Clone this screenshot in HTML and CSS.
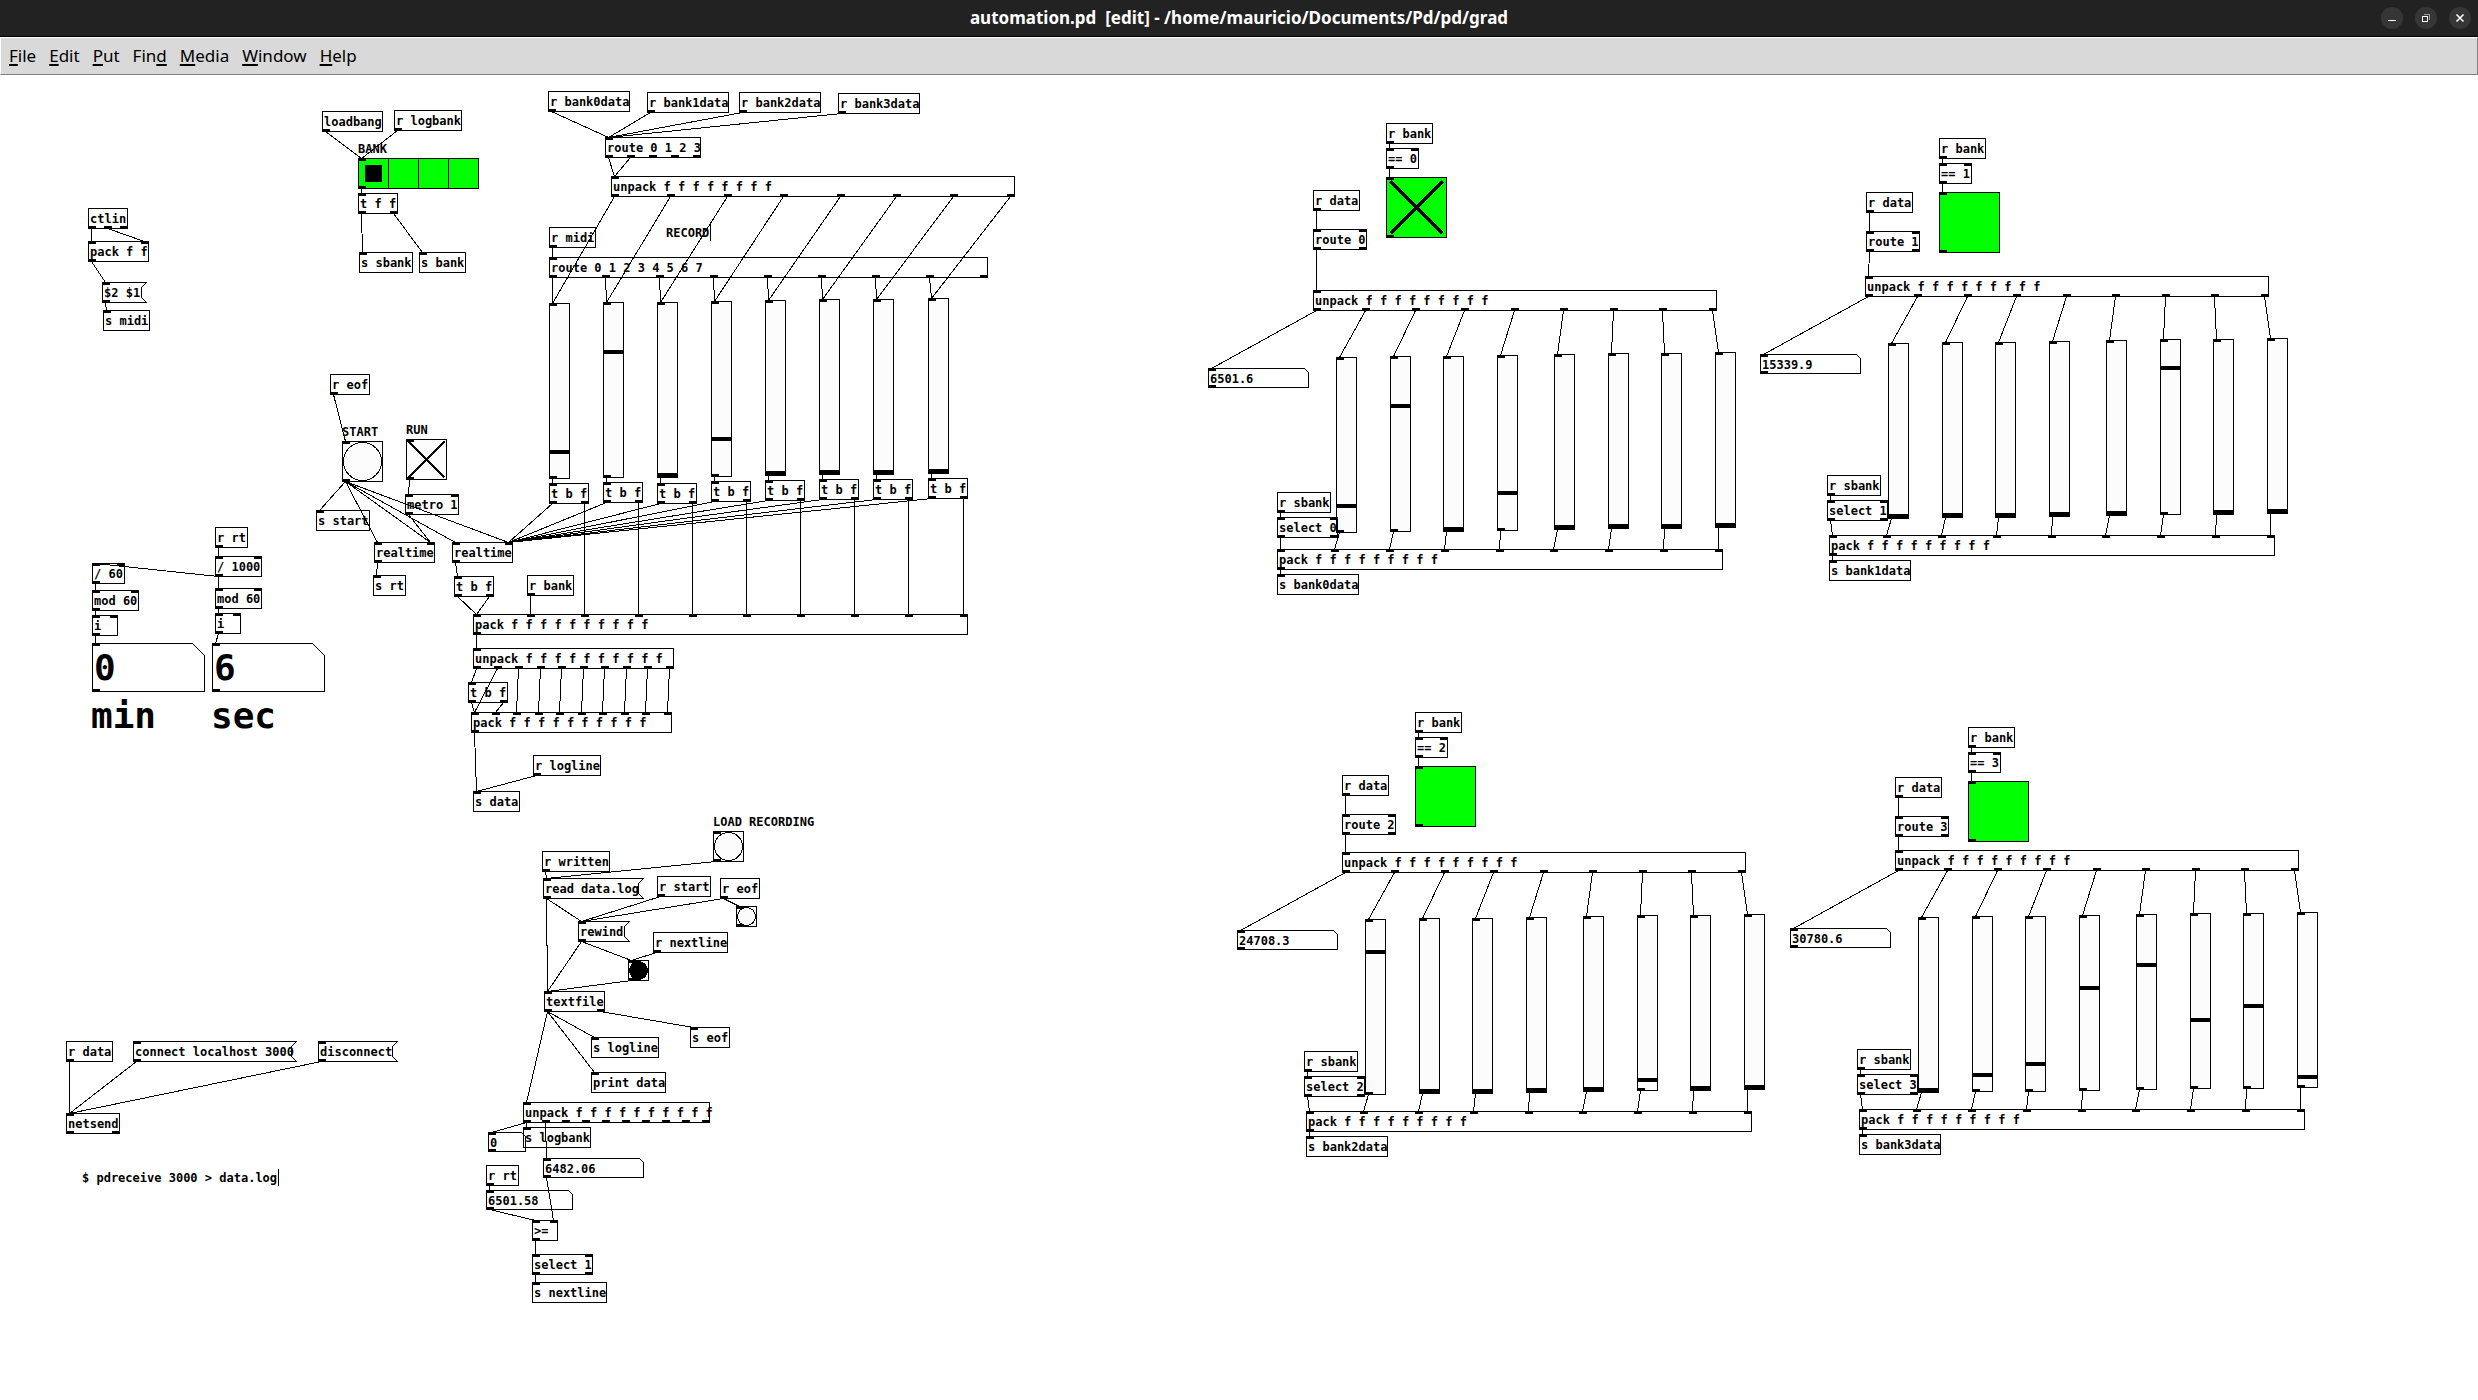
FILE: index.html
```html
<!DOCTYPE html>
<html lang="en">
<head>
<meta charset="utf-8">
<title>automation.pd</title>
<link rel="stylesheet" href="styles.css">
</head>
<body>
<header class="titlebar">
  <h1 class="title">automation.pd&nbsp; [edit] - /home/mauricio/Documents/Pd/pd/grad</h1>
  <div class="window-controls">
    <button class="control" type="button" aria-label="Minimize"><svg viewBox="0 0 22 22"><path d="M7 13.5h8" stroke="#fff"/></svg></button>
    <button class="control" type="button" aria-label="Restore"><svg viewBox="0 0 22 22"><path d="M9 7.5h5.5V13" stroke="#999"/><path d="M7.500 9.500h5v5h-5z" stroke="#fff"/></svg></button>
    <button class="control" type="button" aria-label="Close"><svg class="smooth" viewBox="0 0 22 22"><path d="M7.500 7.500l7 7M14.500 7.500l-7 7" stroke="#fff" stroke-width="1.600"/></svg></button>
  </div>
</header>
<nav class="menubar">
  <a class="menu" href="#file"><u>F</u>ile</a>
  <a class="menu" href="#edit"><u>E</u>dit</a>
  <a class="menu" href="#put"><u>P</u>ut</a>
  <a class="menu" href="#find">Fin<u>d</u></a>
  <a class="menu" href="#media"><u>M</u>edia</a>
  <a class="menu" href="#window"><u>W</u>indow</a>
  <a class="menu" href="#help"><u>H</u>elp</a>
</nav>
<main class="patch" id="patch"></main>
<script src="patch.js"></script>
</body>
</html>
```
FILE: styles.css
```css
* { box-sizing: border-box; }

body {
  margin: 0;
  min-height: 100vh;
  display: flex;
  flex-direction: column;
  background: #fff;
  color: #000;
  font-family: "DejaVu Sans Mono", "Liberation Mono", monospace;
}

/* Window frame */
.titlebar {
  display: grid;
  grid-template-columns: 1fr auto 1fr;
  align-items: center;
  height: 37px;
  padding: 0 7px;
  background: #222;
  border-bottom: 1px solid #000;
  color: #fff;
}
.title {
  grid-column: 2;
  margin: 0;
  font: 700 17px/24px "Noto Sans", "Open Sans", sans-serif;
}
.window-controls {
  display: flex;
  justify-content: flex-end;
  gap: 12px;
}
.control {
  width: 22px;
  height: 22px;
  padding: 0;
  border: 0;
  border-radius: 50%;
  background: #363636;
}
.control svg {
  display: block;
  fill: none;
  shape-rendering: crispEdges;
}
.control .smooth { shape-rendering: auto; }

.menubar {
  display: flex;
  align-items: center;
  gap: 13px;
  height: 38px;
  padding: 0 8px;
  background: #d9d9d9;
  border: 1px solid;
  border-color: #fff #828282 #828282 #fff;
}
.menu {
  color: #000;
  text-decoration: none;
  font: 17px/24px "Noto Sans", "Open Sans", sans-serif;
}
.menu u {
  text-decoration-thickness: 2px;
  text-underline-offset: 2px;
  text-decoration-skip-ink: none;
}

/* Patch canvas */
.patch {
  position: relative;
  flex: 1;
  font-size: 12px;
  font-weight: bold;
  line-height: 21px;
}
.cords {
  position: absolute;
  inset: 0;
  width: 100%;
  height: 100%;
  overflow: visible;
  pointer-events: none;
  fill: none;
  stroke: #000;
  shape-rendering: crispEdges;
}
.cords .solid { fill: #000; stroke: none; }
.cords .filled { fill: #000; }

.node {
  position: absolute;
  margin: 0;
  padding: 0 0 0 1px;
  border: 1px solid #000;
  border-radius: 0;
  background: none;
  color: #000;
  font: inherit;
  text-align: left;
  white-space: pre;
  appearance: none;
}
.message, .number {
  padding-top: 2px;
  border-color: transparent;
  line-height: 17px;
}
.number { outline: 0; }
.number.large {
  padding-top: 0;
  font-size: 36px;
}
.comment {
  border-width: 0 1px 0 0;
  padding: 0 1px;
  line-height: 19px;
}
.label { border: 0; padding: 0; line-height: 16px; }
.label.large { font-size: 36px; line-height: 44px; }
.bang, .toggle { background: #fcfcfc; }
.toggle.lit { background: #0f0; }

.slider {
  background: #fcfcfc;
  padding: 0;
  writing-mode: vertical-lr;
  direction: rtl;
}
.slider::-webkit-slider-runnable-track {
  width: 100%;
  background: none;
}
.slider::-webkit-slider-thumb {
  appearance: none;
  width: 19px;
  height: 4px;
  border: 0;
  background: #000;
}

.radio {
  display: flex;
  padding: 0;
  background: #0f0;
}
.cell {
  flex: 1;
  margin: 0;
  border-left: 1px solid #000;
  appearance: none;
}
.cell:first-child { border-left: 0; }
.cell:checked { background: linear-gradient(#000, #000) 6px 6px / 17px 17px no-repeat; }
```
FILE: patch.js
```javascript
// Coordinates are measured from the top left corner of the window frame.
const FRAME = 75;
const CHAR = 7;
const IOLET = 8;
const SVG_NS = 'http://www.w3.org/2000/svg';

const patch = document.getElementById('patch');
const cords = document.createElementNS(SVG_NS, 'svg');
cords.setAttribute('class', 'cords');

function draw(tag, attrs) {
  const el = document.createElementNS(SVG_NS, tag);
  for (const key in attrs) el.setAttribute(key, attrs[key]);
  cords.append(el);
}

function place(tag, kind, x, y, w, h, props) {
  const el = Object.assign(document.createElement(tag), props);
  el.className = 'node ' + kind;
  el.style.left = x + 'px';
  el.style.top = y - FRAME + 'px';
  if (w) el.style.width = w + 1 + 'px';
  if (h) el.style.height = h + 1 + 'px';
  patch.append(el);
  return el;
}

const slot = (node, i, count) =>
  node.x + (count > 1 ? Math.floor((node.w - IOLET + 1) * i / (count - 1)) : 0);

function iolets(node) {
  for (let i = 0; i < node.ins; i++)
    draw('rect', { class: 'solid', x: slot(node, i, node.ins), y: node.y - FRAME, width: IOLET, height: 3 });
  for (let i = 0; i < node.outs; i++)
    draw('rect', { class: 'solid', x: slot(node, i, node.outs), y: node.y + node.h - 2 - FRAME, width: IOLET, height: 3 });
  return node;
}

const textWidth = text => Math.max(3, text.length) * CHAR + 4;

function obj(x, y, text, ins, outs, w = textWidth(text)) {
  place('div', 'object', x, y, w, 20, { textContent: text });
  return iolets({ x, y, w, h: 20, ins, outs });
}
const recv = (x, y, name) => obj(x, y, 'r ' + name, 0, 1);
const send = (x, y, name) => obj(x, y, 's ' + name, 1, 0);

function msg(x, y, text) {
  const w = textWidth(text);
  place('button', 'message', x, y, w, 20, { type: 'button', textContent: text });
  const t = y - FRAME + 0.5;
  draw('path', { d: `M${x + 0.5} ${t}h${w + 5}l-5 5v10l5 5h${-w - 5}z` });
  return iolets({ x, y, w, h: 20, ins: 1, outs: 1 });
}

function num(x, y, w, h, value, name, kind = '') {
  const input = place('input', 'number ' + kind, x, y, w, h, { type: 'text', value, id: name });
  input.setAttribute('aria-label', name);
  const cut = Math.floor(h / 4);
  draw('path', { d: `M${x + 0.5} ${y - FRAME + 0.5}h${w - cut}l${cut} ${cut}v${h - cut}h${-w}z` });
  return iolets({ x, y, w, h, ins: 1, outs: 1 });
}

function bang(x, y, size, name, filled) {
  const el = place('button', 'bang', x, y, size, size, { type: 'button', id: name });
  el.setAttribute('aria-label', name);
  draw('circle', { class: filled ? 'filled' : '', cx: x + size / 2 + 0.5, cy: y - FRAME + size / 2 + 0.5, r: size / 2 - 1 });
  return iolets({ x, y, w: size, h: size, ins: 1, outs: 1 });
}

function toggle(x, y, size, name, checked, kind = '') {
  const el = place('input', 'toggle ' + kind, x, y, size, size, { type: 'checkbox', id: name, checked });
  el.setAttribute('aria-label', name);
  if (checked) {
    const inset = Math.floor(size / 15) + 0.5;
    const a = x + inset, b = x + size + 1 - inset;
    const t = y - FRAME + inset, u = y - FRAME + size + 1 - inset;
    draw('path', { 'stroke-width': size / 20, d: `M${a} ${t}L${b} ${u}M${b} ${t}L${a} ${u}` });
  }
  return iolets({ x, y, w: size, h: size, ins: 1, outs: 1 });
}

function slider(x, y, knob, name) {
  const el = place('input', 'slider', x, y, 20, 175, { type: 'range', min: 0, max: 170 });
  el.value = 171 - knob;
  el.setAttribute('aria-label', name);
  return iolets({ x, y, w: 20, h: 175, ins: 1, outs: 1 });
}

function comment(x, y, text) {
  place('div', 'comment', x, y, 0, 16, { textContent: text });
}
function label(x, y, text, target, kind = '') {
  place('label', 'label ' + kind, x, y, 0, 0, { textContent: text, htmlFor: target });
}

function wire(from, out, to, inlet) {
  draw('line', {
    x1: slot(from, out, from.outs) + 3.5, y1: from.y + from.h - FRAME + 0.5,
    x2: slot(to, inlet, to.ins) + 3.5, y2: to.y - FRAME + 0.5,
  });
}
const chain = (...nodes) => nodes.slice(1).forEach((n, i) => wire(nodes[i], 0, n, 0));
const fs = count => ' f'.repeat(count);

// MIDI input
const ctlin = obj(88, 208, 'ctlin', 0, 3);
const packMidi = obj(88, 241, 'pack f f', 2, 1);
chain(ctlin, packMidi, msg(102, 282, '$2 $1'), send(103, 310, 'midi'));
wire(ctlin, 1, packMidi, 1);

// Bank selector
const loadbang = obj(322, 111, 'loadbang', 0, 1);
const logbank = recv(394, 110, 'logbank');
const group = place('fieldset', 'radio', 358, 158, 120, 30);
group.setAttribute('aria-label', 'BANK');
for (let i = 0; i < 4; i++) {
  const cell = Object.assign(document.createElement('input'),
    { type: 'radio', name: 'bank', className: 'cell', id: 'bank-cell-' + i, checked: i === 0 });
  cell.setAttribute('aria-label', 'Bank ' + i);
  group.append(cell);
}
label(358, 141, 'BANK', 'bank-cell-0');
const radio = iolets({ x: 358, y: 158, w: 120, h: 30, ins: 1, outs: 1 });
const tff = obj(358, 193, 't f f', 1, 2);
chain(loadbang, radio, tff, send(359, 252, 'sbank'));
chain(logbank, radio);
wire(tff, 1, send(419, 252, 'bank'), 0);

// Recorder
const routeBanks = obj(605, 137, 'route 0 1 2 3', 1, 5);
const unpackBank = obj(611, 176, 'unpack' + fs(8), 1, 8, 403);
[[548, 91], [647, 92], [739, 92], [838, 93]].forEach(([x, y], i) =>
  chain(recv(x, y, `bank${i}data`), routeBanks));
chain(routeBanks, unpackBank);
wire(routeBanks, 1, unpackBank, 0);
comment(665, 224, 'RECORD');
const routeMidi = obj(549, 257, 'route 0 1 2 3 4 5 6 7', 1, 9, 438);
chain(recv(549, 227, 'midi'), routeMidi);

const realtimeRt = obj(374, 542, 'realtime', 2, 1);
const realtime = obj(452, 542, 'realtime', 2, 1);
const packLog = obj(473, 614, 'pack' + fs(10), 10, 1, 494);
[[549, 303, 147, 483], [603, 302, 48, 482], [657, 302, 171, 483], [711, 301, 136, 481],
 [765, 300, 171, 480], [819, 299, 171, 479], [873, 299, 171, 479], [928, 298, 171, 478],
].forEach(([x, y, knob, ty], i) => {
  const fader = slider(x, y, knob, 'Record fader ' + i);
  const tbf = obj(x, ty, 't b f', 1, 2);
  wire(unpackBank, i, fader, 0);
  wire(routeMidi, i, fader, 0);
  chain(fader, tbf);
  wire(tbf, 0, realtime, 1);
  wire(tbf, 1, packLog, i + 2);
});

// Transport
const start = bang(342, 441, 40, 'START');
label(342, 424, 'START', 'START');
chain(recv(330, 374, 'eof'), start, send(316, 510, 'start'));
const run = toggle(406, 439, 40, 'RUN', true);
label(406, 422, 'RUN', 'RUN');
const metro = obj(405, 494, 'metro 1', 2, 1);
chain(run, metro);
wire(metro, 0, realtimeRt, 1);
for (const clock of [realtimeRt, realtime]) {
  wire(start, 0, clock, 0);
  wire(start, 0, clock, 1);
}
chain(realtimeRt, send(373, 575, 'rt'));
const tbfTime = obj(454, 576, 't b f', 1, 2);
chain(realtime, tbfTime, packLog);
wire(tbfTime, 1, packLog, 0);
wire(recv(527, 575, 'bank'), 0, packLog, 1);

const unpackLog = obj(473, 648, 'unpack' + fs(10), 1, 10, 200);
const tbfLog = obj(468, 682, 't b f', 1, 2);
const packLine = obj(471, 712, 'pack' + fs(10), 10, 1, 200);
const sendData = send(473, 791, 'data');
chain(packLog, unpackLog, tbfLog, packLine, sendData);
wire(unpackLog, 1, packLine, 0);
wire(tbfLog, 1, packLine, 1);
for (let i = 2; i < 10; i++) wire(unpackLog, i, packLine, i);
chain(recv(533, 755, 'logline'), sendData);

// Clock display
const div1000 = obj(215, 556, '/ 1000', 2, 1);
const div60 = obj(92, 563, '/ 60', 2, 1);
chain(recv(215, 527, 'rt'), div1000, obj(215, 588, 'mod 60', 2, 1), obj(215, 613, 'i', 2, 1),
  num(212, 643, 112, 48, '6', 'sec', 'large'));
chain(div1000, div60, obj(92, 590, 'mod 60', 2, 1), obj(92, 615, 'i', 2, 1),
  num(92, 643, 112, 48, '0', 'min', 'large'));
label(91, 694, 'min', 'min', 'large');
label(211, 694, 'sec', 'sec', 'large');

// Network logging
const netsend = obj(66, 1113, 'netsend', 1, 2);
chain(recv(66, 1041, 'data'), netsend);
chain(msg(133, 1041, 'connect localhost 3000'), netsend);
chain(msg(318, 1041, 'disconnect'), netsend);
comment(81, 1169, '$ pdreceive 3000 > data.log');

// Playback
const load = bang(713, 831, 30, 'LOAD RECORDING');
label(713, 814, 'LOAD RECORDING', 'LOAD RECORDING');
const read = msg(543, 878, 'read data.log');
const rewind = msg(578, 921, 'rewind');
const next = bang(628, 960, 20, 'Next line', true);
const textfile = obj(544, 991, 'textfile', 1, 2);
const eof = recv(720, 878, 'eof');
chain(recv(542, 851, 'written'), read, textfile);
chain(load, read, rewind, textfile);
chain(recv(657, 876, 'start'), rewind, next);
chain(eof, rewind);
chain(eof, bang(736, 906, 20, 'End of file'));
chain(recv(653, 932, 'nextline'), next, textfile);
chain(textfile, send(591, 1037, 'logline'));
chain(textfile, obj(591, 1072, 'print data', 1, 0));
wire(textfile, 1, send(690, 1027, 'eof'), 0);
const unpackRead = obj(523, 1102, 'unpack' + fs(10), 1, 10);
chain(textfile, unpackRead, send(523, 1127, 'logbank'));
chain(unpackRead, num(488, 1132, 37, 19, '0', 'Logged bank'));
const logged = num(543, 1158, 100, 19, '6482.06', 'Logged time');
const compare = obj(532, 1220, '>=', 2, 1);
wire(unpackRead, 1, logged, 0);
wire(logged, 0, compare, 1);
chain(recv(486, 1165, 'rt'), num(486, 1190, 86, 19, '6501.58', 'Current time'), compare,
  obj(532, 1254, 'select 1', 2, 2), send(532, 1282, 'nextline'));

// Playback banks
const FADERS = [[23, 67], [77, 66], [130, 66], [184, 65], [241, 64], [295, 63], [348, 63], [402, 62]];
const banks = [
  { top: [1386, 123], data: [1313, 190], unpack: [1313, 290], sbank: [1277, 492], time: '6501.6',
    knobs: [147, 48, 171, 136, 171, 171, 171, 171] },
  { top: [1939, 138], data: [1866, 192], unpack: [1865, 276], sbank: [1827, 475], time: '15339.9',
    knobs: [171, 171, 171, 171, 171, 27, 171, 171] },
  { top: [1415, 712], data: [1342, 775], unpack: [1342, 852], sbank: [1304, 1051], time: '24708.3',
    knobs: [31, 171, 171, 171, 171, 163, 171, 171] },
  { top: [1968, 727], data: [1895, 777], unpack: [1895, 850], sbank: [1857, 1049], time: '30780.6',
    knobs: [171, 157, 146, 71, 49, 105, 91, 163] },
];
banks.forEach(({ top, data, unpack, sbank, time, knobs }, n) => {
  const [tx, ty] = top, [dx, dy] = data, [ux, uy] = unpack, [sx, sy] = sbank;
  chain(recv(tx, ty, 'bank'), obj(tx, ty + 25, '== ' + n, 2, 1),
    toggle(tx, ty + 54, 60, `Bank ${n} active`, n === 0, 'lit'));
  const split = obj(ux, uy, 'unpack' + fs(9), 1, 9, 403);
  chain(recv(dx, dy, 'data'), obj(dx, dy + 39, 'route ' + n, 2, 2), split,
    num(ux - 105, uy + 78, 100, 19, time, `Bank ${n} time`));
  const px = n === 0 ? sx : sx + 2;
  const pack = obj(px, uy + 259, 'pack' + fs(9), 9, 1, 445);
  FADERS.forEach(([fx, fy], i) => {
    const fader = slider(ux + fx, uy + fy, knobs[i], `Bank ${n} fader ${i}`);
    wire(split, i + 1, fader, 0);
    wire(fader, 0, pack, i + 1);
  });
  chain(recv(sx, sy, 'sbank'), obj(sx, sy + 25, 'select ' + n, 2, 2), pack,
    send(px, uy + 284, `bank${n}data`));
});

patch.append(cords);
```
